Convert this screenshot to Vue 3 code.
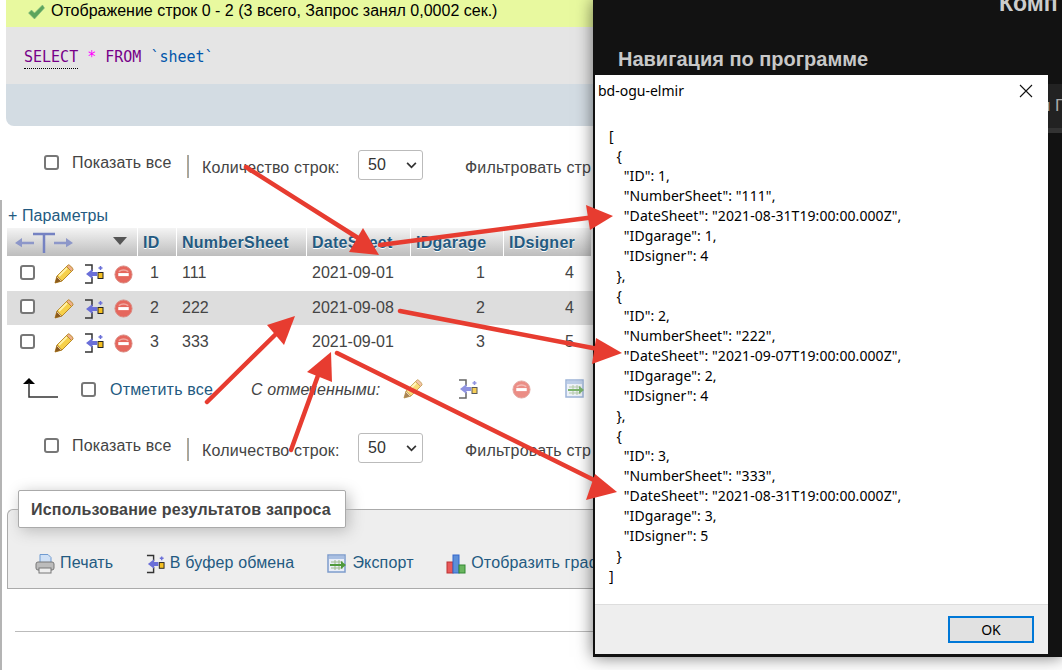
<script setup>
const rows = [
  { id: 1, num: '111', date: '2021-09-01', garage: 1, signer: 4 },
  { id: 2, num: '222', date: '2021-09-08', garage: 2, signer: 4 },
  { id: 3, num: '333', date: '2021-09-01', garage: 3, signer: 5 },
]
const json = `[
  {
    "ID": 1,
    "NumberSheet": "111",
    "DateSheet": "2021-08-31T19:00:00.000Z",
    "IDgarage": 1,
    "IDsigner": 4
  },
  {
    "ID": 2,
    "NumberSheet": "222",
    "DateSheet": "2021-09-07T19:00:00.000Z",
    "IDgarage": 2,
    "IDsigner": 4
  },
  {
    "ID": 3,
    "NumberSheet": "333",
    "DateSheet": "2021-08-31T19:00:00.000Z",
    "IDgarage": 3,
    "IDsigner": 5
  }
]`
const arrows = [
  { line: '246,167 366,243', head: '379,255 349,252 363,228' },
  { line: '380,245 595,217', head: '613,216 586,205 590,230' },
  { line: '207,402 278,332', head: '295,316 267,325 284,345' },
  { line: '291,450 320,370', head: '331,352 307,372 332,382' },
  { line: '400,311 598,349', head: '622,353 596,338 592,364' },
  { line: '337,353 596,481', head: '617,492 595,474 586,500' },
]
</script>

<template>
  <div class="page">
    <svg class="defs" width="0" height="0">
      <defs>
        <symbol id="i-pencil" viewBox="0 0 20 20">
          <path d="M1 19l2-7L13 2l5 5L8 17z" fill="#f6d04a" stroke="#b9882a" stroke-width="1"/>
          <path d="M12.500 2.500l5 5 1.500-1.500c.6-1.200-3-5-4.500-5.200z" fill="#eeb08a" stroke="#b9882a"/>
          <path d="M5 12L13 4" stroke="#fff2a8" stroke-width="1.800"/>
          <path d="M1 19l2-7 5 5z" fill="#8a5a1e"/>
          <path d="M3 13l4 4" stroke="#e8c69a" stroke-width="1"/>
        </symbol>
        <symbol id="i-inline" viewBox="0 0 20 20">
          <path d="M1 1h7v6M8 13v6H1" fill="none" stroke="#333" stroke-width="1.500"/>
          <path d="M2 10l6.500-5v3H13v4H8.500v3z" fill="#6a6fd8"/>
          <rect x="14" y="8.500" width="5" height="6" fill="#f5c021" stroke="#222" stroke-width="1"/>
          <path d="M16.500 2v4M14.500 4h4" stroke="#6a6fd8" stroke-width="1.500"/>
        </symbol>
        <symbol id="i-stop" viewBox="0 0 20 20">
          <circle cx="10" cy="10" r="9" fill="#e5675d" stroke="#d98a82"/>
          <path d="M5 7c3-2 7-2 10 0" stroke="#f0a8a0" stroke-width="1.500" fill="none"/>
          <rect x="4.500" y="8.500" width="11" height="3.200" fill="#fff"/>
        </symbol>
        <symbol id="i-export" viewBox="0 0 20 20">
          <rect x="1" y="1" width="17" height="17" fill="#e9eef8" stroke="#7d9ccc" stroke-width="1.500"/>
          <rect x="2" y="2" width="15" height="3" fill="#a9bfe2"/>
          <path d="M4 8h12M4 11h12M4 14h12M8 6v10M12 6v10" stroke="#9db98c"/>
          <path d="M3 10h11V7l5 4-5 4v-3H3z" fill="#4f9a3c"/>
        </symbol>
        <symbol id="i-print" viewBox="0 0 20 20">
          <path d="M5 0.500h8l3 3v6H5z" fill="#cfe0f5" stroke="#6f9ad0"/>
          <rect x="1" y="8" width="18" height="8" rx="2" fill="#bcbcbc" stroke="#777"/>
          <rect x="4" y="14" width="12" height="5" fill="#eee" stroke="#777"/>
        </symbol>
        <symbol id="i-chart" viewBox="0 0 20 20">
          <rect x="1" y="8" width="6" height="11" fill="#e8595a" stroke="#b33"/>
          <rect x="7" y="1" width="6" height="18" fill="#5d8fd8" stroke="#36c"/>
          <rect x="13" y="11" width="6" height="8" fill="#69b55e" stroke="#383"/>
        </symbol>
      </defs>
    </svg>

    <main class="left">
      <div class="upper">
        <div class="success">
          <svg class="check" viewBox="0 0 18 16" width="18" height="16">
            <path d="M1 9l3-3 3 3 8-8 2 3L7 15z" fill="#5ca55c" stroke="#82b982" stroke-width=".6"/>
          </svg>
          <span>Отображение строк 0 - 2 (3 всего, Запрос занял 0,0002 сек.)</span>
        </div>
        <div class="sql">
          <span class="kw under">SELECT</span> <span class="star">*</span> <span class="kw">FROM</span> <span class="tick">`sheet`</span>
        </div>
        <div class="sqlbar"></div>
        <div class="nav nav-top">
          <input type="checkbox" class="cb" />
          <span class="showall">Показать все</span>
          <i class="sep"></i>
          <span class="count">Количество строк:</span>
          <div class="select">
            <span>50</span>
            <svg viewBox="0 0 12 8" width="11" height="7"><path d="M1 1l5 5 5-5" fill="none" stroke="#333" stroke-width="2"/></svg>
          </div>
          <span class="filter">Фильтровать стр</span>
        </div>
      </div>

      <div class="lower">
        <a class="params">+ Параметры</a>

        <div class="grid head">
          <div class="hc hc-first">
            <svg viewBox="0 0 60 26" width="60" height="26" class="tarrows">
              <path d="M1 13l7-5v3.800h12v2.400H8v3zM59 13l-7-5v3.800H40v2.400h12v3z" fill="#8d97c9"/>
              <path d="M19 4h22M30 4v19" stroke="#7582c2" stroke-width="2.500" fill="none"/>
            </svg>
            <svg viewBox="0 0 14 8" width="14" height="8" class="sort"><path d="M0 0h14L7 8z" fill="#555"/></svg>
          </div>
          <div class="hc">ID</div>
          <div class="hc">NumberSheet</div>
          <div class="hc">DateSheet</div>
          <div class="hc">IDgarage</div>
          <div class="hc last">IDsigner</div>
        </div>

        <div v-for="r in rows" :key="r.id" class="grid row" :class="{ marked: r.id === 2 }">
          <div class="actions">
            <input type="checkbox" class="cb" />
            <svg class="ic ic-pencil"><use href="#i-pencil"/></svg>
            <svg class="ic ic-inline"><use href="#i-inline"/></svg>
            <svg class="ic ic-stop"><use href="#i-stop"/></svg>
          </div>
          <div class="num num-id">{{ r.id }}</div>
          <div class="txt">{{ r.num }}</div>
          <div class="txt">{{ r.date }}</div>
          <div class="num num-g">{{ r.garage }}</div>
          <div class="num num-s">{{ r.signer }}</div>
        </div>

        <div class="bulk">
          <svg class="uparrow" viewBox="0 0 36 20" width="36" height="20">
            <path d="M0 6l6-6 6 6z" fill="#000"/>
            <path d="M6 5v14h29" fill="none" stroke="#333" stroke-width="1.500"/>
          </svg>
          <input type="checkbox" class="cb" />
          <a class="markall">Отметить все</a>
          <em class="withsel">С отмеченными:</em>
          <svg class="ic b1"><use href="#i-pencil"/></svg>
          <svg class="ic b2"><use href="#i-inline"/></svg>
          <svg class="ic b3"><use href="#i-stop"/></svg>
          <svg class="ic b4"><use href="#i-export"/></svg>
        </div>

        <div class="nav nav-bottom">
          <input type="checkbox" class="cb" />
          <span class="showall">Показать все</span>
          <i class="sep"></i>
          <span class="count">Количество строк:</span>
          <div class="select">
            <span>50</span>
            <svg viewBox="0 0 12 8" width="11" height="7"><path d="M1 1l5 5 5-5" fill="none" stroke="#333" stroke-width="2"/></svg>
          </div>
          <span class="filter">Фильтровать стр</span>
        </div>

        <section class="ops">
          <div class="legend">Использование результатов запроса</div>
          <a class="op op1"><svg class="ic"><use href="#i-print"/></svg>Печать</a>
          <a class="op op2"><svg class="ic"><use href="#i-inline"/></svg>В буфер обмена</a>
          <a class="op op3"><svg class="ic"><use href="#i-export"/></svg>Экспорт</a>
          <a class="op op4"><svg class="ic"><use href="#i-chart"/></svg>Отобразить граф</a>
        </section>
        <hr class="rule" />
      </div>
    </main>

    <aside class="dark">
      <div class="comp"><span>Комп</span></div>
      <h2 class="navtitle">Навигация по программе</h2>
      <div class="band"><span>н Г</span></div>

      <div class="dialog">
        <header class="dlg-title">
          <span>bd-ogu-elmir</span>
          <svg viewBox="0 0 14 14" width="14" height="14"><path d="M1 1l12 12M13 1L1 13" stroke="#111" stroke-width="1.100"/></svg>
        </header>
        <pre class="dlg-body">{{ json }}</pre>
        <footer class="dlg-foot"><button class="ok">OK</button></footer>
      </div>
    </aside>

    <svg class="arrows" viewBox="0 0 1062 670" width="1062" height="670">
      <g v-for="(a, i) in arrows" :key="i">
        <polyline :points="a.line" fill="none" stroke="#e73c30" stroke-width="4.500" stroke-linecap="round"/>
        <polygon :points="a.head" fill="#e73c30"/>
      </g>
    </svg>
  </div>
</template>

<style scoped>
.page {
  position: relative;
  display: flex;
  width: 1062px;
  height: 670px;
  overflow: hidden;
  background: #fff;
  font-family: "Liberation Sans", Arial, sans-serif;
  font-size: 16px;
  color: #444;
}
.defs { position: absolute; }
.left { width: 593px; flex: none; }
.upper { height: 200px; }
.success {
  display: flex;
  align-items: center;
  gap: 5px;
  height: 27px;
  margin-left: 6px;
  padding: 0 0 6px 21px;
  box-sizing: border-box;
  background: #e8f99f;
  color: #000;
  font-size: 16px;
}
.check { margin-top: 2px; width: 19px; }
.sql {
  height: 57px;
  margin-left: 6px;
  padding-left: 18px;
  background: #e5e5e5;
  font-family: "DejaVu Sans Mono", monospace;
  font-size: 15px;
  line-height: 60px;
  white-space: pre;
}
.kw { color: #708; }
.under { border-bottom: 1px dotted #000; padding-bottom: 2px; }
.star { color: #f0f; }
.tick { color: #05a; }
.sqlbar {
  height: 42px;
  margin-left: 6px;
  background: #d3dce3;
  border-bottom-left-radius: 8px;
}
.nav {
  display: flex;
  align-items: flex-start;
  height: 30px;
  padding-left: 44px;
  letter-spacing: .15px;
}
.nav-top { margin-top: 24px; }
.cb {
  appearance: none;
  flex: none;
  width: 15px;
  height: 15px;
  margin: 0;
  border: 2px solid #777;
  border-radius: 3px;
  background: #fff;
}
.nav .cb { margin-top: 5px; }
.showall { margin-left: 13px; margin-top: 4px; line-height: 18px; white-space: nowrap; width: 100px; }
.sep {
  flex: none;
  width: 2px;
  height: 23px;
  margin: 5px 13px 0 15px;
  background: linear-gradient(90deg, #c6a77f, #8fa7bd);
}
.count { margin-top: 9px; line-height: 18px; width: 156px; white-space: nowrap; }
.select {
  display: flex;
  align-items: center;
  justify-content: space-between;
  width: 65px;
  height: 30px;
  padding: 0 5px 0 9px;
  box-sizing: border-box;
  border: 1px solid #bbb;
  border-radius: 3px;
  color: #333;
}
.filter { margin: 9px 0 0 42px; line-height: 18px; white-space: nowrap; }

.lower { border-left: 2px solid #b4b4b4; height: 470px; }
.params {
  display: block;
  height: 28px;
  padding-left: 6px;
  padding-top: 7px;
  box-sizing: border-box;
  line-height: 18px;
  letter-spacing: .1px;
  color: #235a81;
}
.grid {
  display: grid;
  grid-template-columns: 131px 39px 130px 104px 93px 87px;
  margin-left: 5px;
}
.head { height: 28px; }
.hc {
  display: flex;
  align-items: center;
  padding: 1px 0 0 5px;
  margin-right: 1px;
  font-weight: bold;
  letter-spacing: .25px;
  color: #235a81;
  text-shadow: 0 1px 0 #fff;
  background: linear-gradient(#f4f4f4, #bdbdbd);
}
.hc-first { position: relative; padding: 0; }
.hc.last { margin-right: 0; }
.tarrows { position: absolute; left: 7px; top: 2px; }
.sort { position: absolute; left: 106px; top: 9px; }
.row { height: 35px; align-items: center; }
.row.marked { background: #ddd; height: 34px; }
.actions { position: relative; height: 100%; display: flex; align-items: center; padding-left: 13px; }
.actions .cb { margin-top: -3px; }
.ic { width: 20px; height: 20px; flex: none; }
.actions .ic { margin-top: 1px; }
.ic-pencil { margin-left: 19px; }
.ic-inline { margin-left: 10px; width: 20px; }
.ic-stop { margin-left: 10px; width: 19px; height: 19px; }
.txt { padding-left: 5px; margin-top: -1px; }
.num { text-align: right; margin-top: -1px; }
.num-id { padding-right: 18px; }
.num-g { padding-right: 19px; }
.num-s { padding-right: 17px; }

.bulk {
  display: flex;
  align-items: center;
  height: 40px;
  margin-top: 9px;
  padding-left: 21px;
}
.uparrow { margin-top: -3px; }
.markall { margin: 2px 0 0 14px; color: #235a81; width: 141px; white-space: nowrap; letter-spacing: .2px; }
.bulk .cb { margin-left: 22px; }
.withsel { margin-top: 2px; font-style: italic; white-space: nowrap; width: 152px; letter-spacing: .1px; }
.bulk .ic { opacity: .75; }
.b1 { margin-left: 0; }
.b2 { margin-left: 35px; }
.b3 { margin-left: 34px; width: 19px; height: 19px; }
.b4 { margin-left: 34px; }

.nav-bottom { margin-top: 24px; padding-left: 42px; }

.ops {
  position: relative;
  display: flex;
  align-items: center;
  height: 80px;
  margin: 46px 0 0 5px;
  padding: 27px 0 0 27px;
  box-sizing: border-box;
  border: 1px solid #aaa;
  border-right: 0;
  border-top-left-radius: 6px;
  background: #eee;
  white-space: nowrap;
  overflow: visible;
  letter-spacing: .15px;
}
.legend {
  position: absolute;
  left: 10px;
  top: -20px;
  width: 328px;
  height: 38px;
  box-sizing: border-box;
  padding-left: 12px;
  line-height: 38px;
  font-size: 16px;
  letter-spacing: .19px;
  font-weight: bold;
  color: #444;
  background: #fff;
  border: 1px solid #aaa;
  border-radius: 2px;
  box-shadow: 3px 3px 15px #bbb;
}
.op { display: flex; align-items: center; color: #235a81; gap: 5px; }
.op .ic { margin-top: 2px; }
.op1 { width: 111px; }
.op2 { width: 182px; }
.op2 .ic { width: 19px; }
.op3 { width: 119px; }
.op4 { width: 147px; overflow: hidden; }
.rule {
  margin: 42px 0 0 13px;
  border: 0;
  border-top: 1px solid #bbb;
}

.dark {
  position: relative;
  z-index: 2;
  flex: none;
  align-self: flex-start;
  width: 469px;
  height: 657px;
  background: #121212;
  color: #ccc;
  box-shadow: 0 0 16px rgba(0, 0, 0, .55);
}
.comp {
  display: flex;
  align-items: flex-end;
  height: 14px;
  padding-left: 406px;
  overflow: hidden;
  font-size: 23px;
  font-weight: bold;
  line-height: 24px;
  white-space: nowrap;
}
.comp span { margin-bottom: -1px; }
.navtitle {
  margin: 31px 0 0 25px;
  font-size: 20px;
  line-height: 28px;
  font-weight: bold;
  color: #c8c8c8;
}
.band {
  height: 49px;
  margin-top: 11px;
  padding-left: 448px;
  box-sizing: border-box;
  border-bottom: 5px solid #333;
  background: #222;
  color: #aaa;
  font-size: 17px;
  line-height: 44px;
  white-space: nowrap;
}
.dialog {
  position: absolute;
  left: 0;
  top: 75px;
  width: 455px;
  height: 582px;
  box-sizing: border-box;
  display: flex;
  flex-direction: column;
  background: #fff;
  border-left: 2px solid #111;
  border-bottom: 3px solid #111;
  color: #000;
  font-family: "Noto Sans", sans-serif;
  font-size: 14px;
}
.dlg-title {
  display: flex;
  align-items: center;
  justify-content: space-between;
  height: 31px;
  padding: 0 15px 0 3px;
  flex: none;
}
.dlg-body {
  flex: 1;
  margin: 0;
  padding: 20px 0 0 14px;
  font: inherit;
  line-height: 20px;
  letter-spacing: .07px;
  color: #000;
}
.dlg-foot {
  display: flex;
  justify-content: flex-end;
  align-items: center;
  flex: none;
  height: 50px;
  padding: 0 14px 0 0;
  box-sizing: border-box;
  background: #eee;
  border-top: 1px solid #ddd;
}
.ok {
  width: 86px;
  height: 27px;
  padding: 0;
  font: inherit;
  color: #000;
  background: #e1e1e1;
  border: 2px solid #0078d7;
}
.arrows { position: absolute; left: 0; top: 0; z-index: 3; pointer-events: none; }
</style>
